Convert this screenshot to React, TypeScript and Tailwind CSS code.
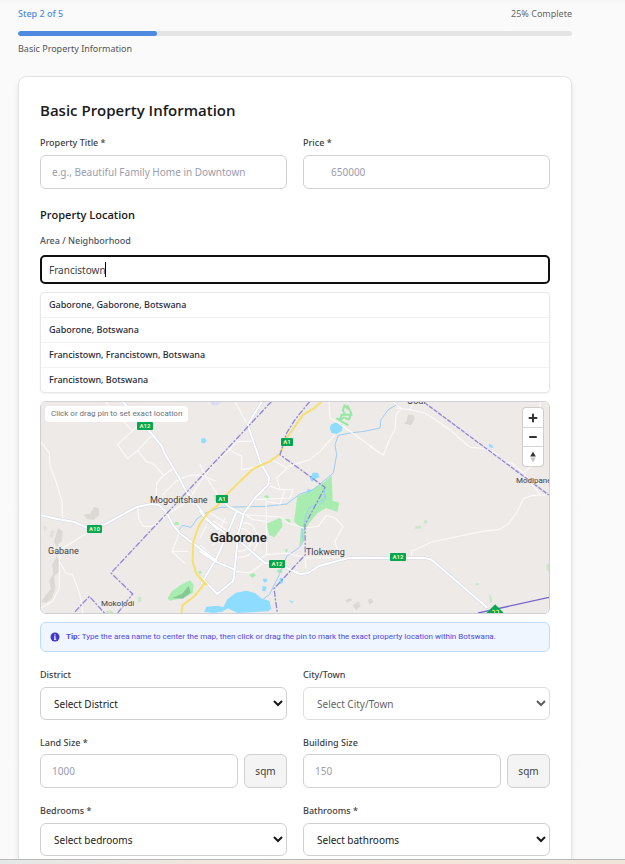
import { useState, type ReactNode } from "react";

const fieldClass =
  "block w-full rounded-md border border-[#d0d0d0] bg-white text-[10px] text-[#1a1a1a] placeholder:text-[#9a9cae]";

function Field({ id, label, tight, children }: { id: string; label: string; tight?: boolean; children: ReactNode }) {
  return (
    <div className="min-w-0">
      <label htmlFor={id} className={`${tight ? "mb-1" : "mb-[5px]"} block text-[9px] font-medium leading-[14px] text-[#404040]`}>
        {label}
      </label>
      {children}
    </div>
  );
}

function SelectField({ id, label, placeholder, disabled }: { id: string; label: string; placeholder: string; disabled?: boolean }) {
  return (
    <Field id={id} label={label}>
      <select id={id} disabled={disabled} className={`${fieldClass} h-[33px] px-[9px] disabled:opacity-70`}>
        <option>{placeholder}</option>
      </select>
    </Field>
  );
}

function SizeField({ id, label, placeholder }: { id: string; label: string; placeholder: string }) {
  return (
    <Field id={id} label={label} tight>
      <div className="flex gap-[6px]">
        <input id={id} placeholder={placeholder} className={`${fieldClass} h-[34px] min-w-0 flex-1 px-[11px]`} />
        <span className="flex h-[34px] w-[43px] items-center justify-center rounded-md border border-[#d0d0d0] bg-[#f4f4f4] text-[10px] text-[#404040]">
          sqm
        </span>
      </div>
    </Field>
  );
}

const minorRoads = {
  west: "M15 132L40 165L42 205L60 250L78 310L80 365M80 450L165 398M70 490L90 525L110 530L125 570L135 605L140 645M70 490L75 450M70 490L70 570L50 610L15 630M315 75L290 98L245 140L275 182L305 157L350 110M305 157L330 190L355 200L383 232L362 255L360 300L385 320M383 232L410 212M290 98L240 50L210 12M305 330L308 362L322 385L350 385L388 355M380 290L420 250Q460 225 495 232L540 250M540 190L500 240L455 310L400 345M430 405L408 460L445 495M410 460L455 460M385 320L430 305L480 320",
  centre:
    "M105 12L143 80M160 130L110 130L88 155L125 175L125 215L182 205M60 180L88 155M20 240L60 300M0 200L20 240M130 350L240 357L265 375L310 390L355 385L380 352L405 360L430 385L405 430L418 478M198 300L200 470L175 485M205 262L240 275L280 275L270 300L165 305M240 275L230 240L262 210L215 185M200 310L240 318L255 275M265 205L330 185L360 160L405 110M387 12L390 60L415 75L450 100L540 165M200 470L260 465L316 480L418 478M105 520L150 525L190 495M316 480L318 510M128 375Q170 370 172 430Q165 480 108 478M120 390Q155 395 155 430Q150 460 112 460M0 440L30 470M20 380L0 420M40 370L85 400L60 430M20 470L70 500M75 360L40 440M30 345L80 375M135 350L160 365L198 370",
  east: "M125 478L125 460L185 432L290 410L350 398L385 395L415 378L440 345L460 302L485 293L525 290M80 30L120 35L165 45L200 68L240 95L270 122L300 148L345 152L375 165L400 193L425 195L460 225L510 290M0 145L40 172L58 125L75 95L78 50L95 32L70 12M120 35L128 12M460 225L515 180M510 12L512 40M380 640L405 645",
};

const majorRoads = {
  west: "M262 12L325 85L345 105L378 145L385 165L430 240L450 280L490 330L510 360L545 395M15 352L65 363L115 372L150 388L200 382L245 358L300 328L345 318L370 322L392 345L410 380L430 405L470 435L540 488",
  centre:
    "M185 12L143 80L160 130L182 195L207 238L205 260L165 300L132 345L115 405L103 520L100 548L52 588L0 535M0 340L20 365L75 405L125 435L195 495L240 500L300 528L325 525L355 505L445 480L545 479M0 460L45 490L105 515M60 300L85 325L130 350M108 345L85 400L50 480L5 555",
  east: "M0 480L165 480L185 485L350 628",
};

const badges = [
  { x: 96, y: 20, w: 16, label: "A12" },
  { x: 46, y: 123, w: 15, label: "A10" },
  { x: 240, y: 36, w: 12, label: "A1" },
  { x: 175, y: 93, w: 12, label: "A1" },
  { x: 228, y: 158, w: 16, label: "A12" },
  { x: 349, y: 151, w: 16, label: "A12" },
];

const places = [
  { x: 109, y: 101, name: "Mogoditshane" },
  { x: 7, y: 152, name: "Gabane" },
  { x: 265, y: 153, name: "Tlokweng" },
];

function MapDrawing() {
  const regions = [
    { key: "west", dx: 0 },
    { key: "centre", dx: 492 },
    { key: "east", dx: 1002 },
  ] as const;
  return (
    <svg viewBox="0 0 508 211" preserveAspectRatio="xMidYMid slice" className="block h-full w-full" role="img" aria-label="Map of Gaborone">
      <rect width="508" height="211" fill="#edeae8" />
      <g transform="translate(-5 -4) scale(.33333)" fill="none" strokeLinejoin="round" strokeLinecap="round">
        <g fill="#dcd8d4">
          <path d="M142 350l20-3 12-20 14 4 2 20-18 15-18-2zM66 390l14 10-2 28-14 14-2 36 12 10-4 34-16 12 4 38-10 28-18 14-14-2 14-22 14-16-4-26 12-20-4-28 12-20 2-30-8-20z" />
          <path d="M20 382l14 6-8 16zM46 395l10 4-6 22-10-6z" opacity=".6" />
          <path d="M1116 50l16 0 4 14-12 18-20-6 8-6zM927 608l14-8 8 6-14 8zM950 622l18-12 6 14-14 12zM996 606l10-6 6 12-12 8z" />
        </g>
        <g fill="#a9ecb0">
          <path d="M887 232L890 308L910 314L904 342L870 330L845 345L820 375L808 395L804 425L790 444L795 390L774 370L784 295L815 282L865 252z" />
          <path d="M692 378L735 358L740 385L727 402L715 418L700 412z" />
          <path d="M395 600L408 580L435 560L462 547L473 560L470 585L440 600L400 608z" />
          <path d="M684 295l10-4 6 10-8 8zM640 530l12-6 8 8-12 8zM748 362l14 2 2 12-14-4zM748 453l6 0 0 10-6 0zM487 520l8-2 2 8-8 2zM723 515l16-3 0 12-14 0zM416 372l12 0 0 9-12 0zM535 290l8 4 0 16-6 0z" />
        </g>
        <path d="M408 600l30-12 20-24 6 20-24 18z" fill="#84c893" />
        <path d="M925 22l10 10 0-8 10 20-6 22-14-8-14 8 6-16 10 0-6-12zM903 62l34 20M917 50l30 0" stroke="#94e8a0" strokeWidth="6" strokeDasharray="9 5" />
        <g fill="#cbe6cb">
          <path d="M305 598l10-2 2 12-10 6zM210 640l14-3 12 8-28 0zM1138 385l16-2 2 8-18 2zM1164 367l10 0 0 10-10 0zM1320 556l10 0-2 6-8 0zM1359 588l6 6 4 18-8 2zM1532 500l7-4 0 26-7-6z" />
        </g>
        <g fill="#8edcff">
          <path d="M505 642l6-16 35-3 16 5 12-24 26-20 32-6 26 8 20 16 22 6 6 24-10 8-92 5-28-14-18 10-26 4z" />
          <path d="M884 80l18-8 18 8-2 18-16 10-16-4-4-12zM830 224l16 0 4 14-14 6-8 8-6-10zM680 542l12 0 2 8-10 4zM680 564l12 2-4 14-10-2zM732 540l10 0-2 16-10 2zM758 607l16 4-8 4zM496 122l10-2 6 8-6 8-10-2zM815 272l10 4-4 10-8-2zM1358 138l10 2 4 10-12-2z" />
        </g>
        <path d="M523 12h35l-16 10h-14z" fill="#dcdcf6" />
        <path d="M430 395L440 382L465 388L485 360L510 345L552 328L690 325L752 318L792 288L832 275L892 225L902 170L897 140L907 112L942 105L985 100L1032 90L1035 65L1057 35L1085 18M865 270L866 300L840 320L818 330L808 360L798 400L802 430L790 448L752 475L730 530L700 590L682 603M864 275L870 300L855 318" stroke="#9ccdf3" strokeWidth="3" />
        {regions.map((r) => (
          <path key={r.key} transform={`translate(${r.dx} 0)`} d={minorRoads[r.key]} stroke="#fbfaf9" strokeWidth="3.5" />
        ))}
        {regions.map((r) => (
          <path key={r.key} transform={`translate(${r.dx} 0)`} d={majorRoads[r.key]} stroke="#d3d8e6" strokeWidth="9" />
        ))}
        {regions.map((r) => (
          <path key={r.key} transform={`translate(${r.dx} 0)`} d={majorRoads[r.key]} stroke="#fff" strokeWidth="6" />
        ))}
        <path d="M436 645L440 622L475 595L506 557L480 525L470 490L472 430L490 380L515 345L542 325L572 290L612 250L652 212L702 190L732 168L752 120L777 85L802 50L832 32L856 12M492 538L512 560" stroke="#f6df6c" strokeWidth="6" />
        <g stroke="#8f86da" strokeWidth="4" strokeDasharray="15 8 3 8">
          <path d="M705 12L225 525L290 588L245 645M118 640L160 595L205 645M820 12L777 65L752 105L732 170L867 268L807 380L808 470L714 572L724 645" />
          <path d="M1167 15L1537 290" strokeDasharray="10 7" />
        </g>
        <path d="M1327 645L1539 598" stroke="#7566cd" strokeWidth="4" />
        <path d="M1378 621L1402 645L1354 645z" fill="#00a651" stroke="#00a651" strokeWidth="3" />
        <path d="M1370 637h6v8M1382 637h6v8" stroke="#d8ec70" strokeWidth="3" />
      </g>
      {badges.map((b, i) => (
        <g key={i}>
          <rect x={b.x} y={b.y} width={b.w} height="8" rx="1" fill="#00a651" />
          <text x={b.x + b.w / 2} y={b.y + 6} textAnchor="middle" className="fill-[#f3f5b0] font-['Roboto',sans-serif] text-[6px] font-bold">
            {b.label}
          </text>
        </g>
      ))}
      <g className="fill-[#3d3d3d] stroke-[#edeae8] stroke-1 font-['Roboto',sans-serif] text-[9px] [paint-order:stroke]">
        {places.map((p) => (
          <text key={p.name} x={p.x} y={p.y}>{p.name}</text>
        ))}
        <text x="60" y="204" className="text-[8px]">Mokolodi</text>
        <text x="475" y="81" className="text-[8px]">Modipane</text>
        <text x="366" y="2">Oodi</text>
        <text x="169" y="140" className="fill-[#222] stroke-2 text-[13px] font-semibold">Gaborone</text>
      </g>
    </svg>
  );
}

function MapControls() {
  return (
    <div className="absolute right-[6px] top-[6px] flex w-[20px] flex-col divide-y divide-[#d5d5d5] rounded-[3px] bg-white shadow-[0_0_0_1px_rgba(0,0,0,0.12)]">
      <button type="button" aria-label="Zoom in" className="flex h-[20px] items-center justify-center">
        <svg viewBox="0 0 20 20" className="size-[20px]"><path d="M10 6.5v7M6.5 10h7" stroke="#333" strokeWidth="2" strokeLinecap="round" /></svg>
      </button>
      <button type="button" aria-label="Zoom out" className="flex h-[19px] items-center justify-center">
        <svg viewBox="0 0 20 20" className="size-[20px]"><path d="M7 10h6" stroke="#333" strokeWidth="2" strokeLinecap="round" /></svg>
      </button>
      <button type="button" aria-label="Reset bearing" className="flex h-[19px] items-center justify-center">
        <svg viewBox="0 0 20 20" className="size-[20px]"><path d="M7.2 9.5L10 4.5l2.8 5z" fill="#333" /><path d="M7.2 10.5h5.6l-2.8 5z" fill="#c4c4c4" /></svg>
      </button>
    </div>
  );
}

const suggestions = ["Gaborone, Gaborone, Botswana", "Gaborone, Botswana", "Francistown, Francistown, Botswana", "Francistown, Botswana"];

export default function App() {
  const [area, setArea] = useState("Francistown");
  return (
    <div className="flex h-screen flex-col bg-[#fafafa] font-['Noto_Sans','Open_Sans',sans-serif] text-[#1a1a1a]">
      <main className="min-h-0 flex-1 overflow-y-auto bg-linear-to-b from-[#f5f5f5] to-[#fafafa] to-[3px] pl-[18px] pr-[53px] pt-[7px] [scrollbar-width:none]">
        <div className="flex justify-between text-[9px] leading-[14px]">
          <span className="font-medium text-[#4f8ae0]">Step 2 of 5</span>
          <span className="text-[#666]">25% Complete</span>
        </div>
        <div className="mt-[10px] h-[5px] overflow-hidden rounded-full bg-[#e4e4e4]">
          <div className="h-full w-1/4 rounded-full bg-[#4f8ae0]" />
        </div>
        <p className="mt-[6px] text-[9px] leading-[14px] text-[#555]">Basic Property Information</p>

        <form className="mt-5 rounded-lg border border-[#e4e4e4] bg-white p-[21px] shadow-md">
          <h1 className="font-['Open_Sans',sans-serif] text-[15px] font-semibold leading-6">Basic Property Information</h1>
          <div className="mt-[14px] grid grid-cols-2 gap-4">
            <Field id="title" label="Property Title *">
              <input id="title" placeholder="e.g., Beautiful Family Home in Downtown" className={`${fieldClass} h-[34px] px-[11px]`} />
            </Field>
            <Field id="price" label="Price *">
              <input id="price" placeholder="650000" className={`${fieldClass} h-[34px] pl-[27px] pr-[11px]`} />
            </Field>
          </div>

          <h2 className="mt-[17px] font-['Open_Sans',sans-serif] text-[11px] font-semibold leading-[18px]">Property Location</h2>
          <label htmlFor="area" className="mt-[10px] block text-[9px] font-medium leading-[14px] text-[#4b5563]">
            Area / Neighborhood
          </label>
          <div className="relative mt-[7px]">
            <input
              id="area"
              value={area}
              onChange={(e) => setArea(e.target.value)}
              className="block h-[29px] w-full rounded-[5px] border-2 border-[#101010] bg-white px-[7px] text-[10px] text-[#404040] outline-none"
            />
            <span className="absolute left-[65px] top-[7px] h-[15px] w-px bg-black" />
          </div>

          <ul className="mt-2 divide-y divide-[#f1f2f4] rounded-[4px] border border-[#e5e7eb] shadow-xs">
            {suggestions.map((s) => (
              <li key={s} className="h-[25px] last:h-6">
                <button type="button" className="block h-full w-full px-2 text-left text-[9px] font-medium text-[#1f2937]">
                  {s}
                </button>
              </li>
            ))}
          </ul>

          <div className="relative mt-2 h-[213px] overflow-hidden rounded-md border border-[#cfd0d6]">
            <MapDrawing />
            <div className="absolute left-1 top-1 rounded-[4px] bg-white/95 px-[6px] font-['Roboto',sans-serif] text-[8px] leading-4 text-[#6b7280]">
              Click or drag pin to set exact location
            </div>
            <MapControls />
          </div>

          <div className="mt-2 flex h-[30px] items-center gap-[6px] rounded-md border border-[#bfdbfe] bg-[#eff6ff] px-[9px] font-['Roboto',sans-serif] text-[8px] text-[#4f46e5]">
            <svg viewBox="0 0 20 20" className="size-[10px] shrink-0" aria-hidden="true">
              <circle cx="10" cy="10" r="9" fill="#4338ca" />
              <path d="M10 4.5v2.5M8 9.5h2v5M8 14.5h4.5" stroke="#fff" strokeWidth="2.2" fill="none" />
            </svg>
            <p><strong className="font-bold">Tip:</strong> Type the area name to center the map, then click or drag the pin to mark the exact property location within Botswana.</p>
          </div>

          <div className="mt-4 grid grid-cols-2 gap-4">
            <SelectField id="district" label="District" placeholder="Select District" />
            <SelectField id="city" label="City/Town" placeholder="Select City/Town" disabled />
            <SizeField id="land" label="Land Size *" placeholder="1000" />
            <SizeField id="building" label="Building Size" placeholder="150" />
            <SelectField id="bedrooms" label="Bedrooms *" placeholder="Select bedrooms" />
            <SelectField id="bathrooms" label="Bathrooms *" placeholder="Select bathrooms" />
          </div>
        </form>
      </main>
      <footer className="h-[5px] shrink-0 border-t border-[#b8b8b8] bg-linear-to-r from-[#e4e8e7] via-[#f5e5d9] to-[#f1e6dc]" />
    </div>
  );
}
